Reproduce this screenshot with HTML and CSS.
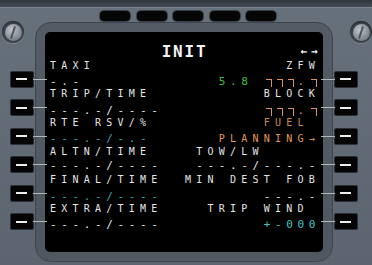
FILE: index.html
```html
<!DOCTYPE html>
<html>
<head>
<meta charset="utf-8">
<link rel="stylesheet" href="styles.css">
</head>
<body>
<div class="device">
  <div class="topbar"></div>
  <div class="annun">
    <span class="lamp"></span><span class="lamp"></span><span class="lamp"></span><span class="lamp"></span><span class="lamp"></span>
  </div>
  <div class="main">
    <div class="side left">
      <div class="socket"><div class="screw"></div></div>
      <div class="lsks">
        <div class="lsk"></div><div class="lsk"></div><div class="lsk"></div>
        <div class="lsk"></div><div class="lsk"></div><div class="lsk"></div>
      </div>
    </div>
    <div class="bezel">
      <div class="screen">
        <div class="title-row"><span></span><span class="title">INIT</span><span class="arrows">←→</span></div>
        <div class="ln sm w">TAXI                 ZFW</div>
        <div class="ln"><span class="lg w">-.-</span><span class="sm">            </span><span class="lg g">5.8</span><span class="sm"> </span><span class="boxes"><i class="box"></i><i class="box"></i><i class="box"></i><span class="lg">.</span><i class="box"></i></span></div>
        <div class="ln sm w">TRIP/TIME          BLOCK</div>
        <div class="ln"><span class="lg w">---.-/----</span><span class="sm">         </span><span class="boxes"><i class="box"></i><i class="box"></i><i class="box"></i><span class="lg">.</span><i class="box"></i></span></div>
        <div class="ln sm"><span class="w">RTE RSV/%          </span><span class="a2">FUEL</span> </div>
        <div class="ln"><span class="lg c">---.-/-.-</span><span class="sm">      </span><span class="sm a">PLANNING→</span></div>
        <div class="ln sm w">ALTN/TIME    TOW/LW     </div>
        <div class="ln lg w">---.-/----   ---.-/---.-</div>
        <div class="ln sm w">FINAL/TIME  MIN DEST FOB</div>
        <div class="ln"><span class="lg c">---.-/----</span><span class="sm">         </span><span class="lg w">---.-</span></div>
        <div class="ln sm w">EXTRA/TIME    TRIP WIND </div>
        <div class="ln"><span class="lg w">---.-/----</span><span class="sm">         </span><span class="lg c2">+-000</span></div>
        <div class="ln sm"> </div>
      </div>
    </div>
    <div class="side right">
      <div class="socket"><div class="screw"></div></div>
      <div class="lsks">
        <div class="lsk"></div><div class="lsk"></div><div class="lsk"></div>
        <div class="lsk"></div><div class="lsk"></div><div class="lsk"></div>
      </div>
    </div>
  </div>
</div>
</body>
</html>
```
FILE: styles.css
```css
html, body {
  margin: 0;
  padding: 0;
  background: #5f6872;
}

.device {
  width: 372px;
  height: 265px;
  display: flex;
  flex-direction: column;
  background: linear-gradient(#67717b, #5c656f);
  overflow: hidden;
}

.topbar {
  height: 7px;
  background: linear-gradient(#30363c, #434a52);
  border-bottom: 1px solid #7a848e;
}

.annun {
  height: 13px;
  box-sizing: border-box;
  padding: 3px 0 0 100px;
  display: flex;
  gap: 6.5px;
}

.lamp {
  width: 30px;
  height: 10px;
  background: #060606;
  border-radius: 4px;
  box-shadow: 0 0 0 1px #3b4148;
}

.main {
  display: flex;
  height: 241px;
}

.side {
  display: flex;
  flex-direction: column;
  box-sizing: border-box;
}

.side.left {
  width: 35px;
  padding-left: 2px;
  align-items: flex-start;
}

.side.right {
  width: 39px;
  align-items: flex-end;
}

.socket {
  width: 22px;
  height: 22px;
  border-radius: 50%;
  background: #3d444b;
  display: flex;
  align-items: center;
  justify-content: center;
  box-shadow: inset 0 1px 2px #23282d, 0 1px 0 #7c858e;
}

.screw {
  width: 17px;
  height: 17px;
  border-radius: 50%;
  background: radial-gradient(circle at 40% 35%, #c2c7cc, #8a9097 55%, #5d636a);
  position: relative;
}

.screw::after {
  content: "";
  position: absolute;
  left: 7.5px;
  top: 2px;
  width: 2px;
  height: 13px;
  background: #50565d;
  transform: rotate(18deg);
}

.lsks {
  display: flex;
  flex-direction: column;
  gap: 13.5px;
  margin-top: 28.5px;
}

.side.left .lsks {
  margin-left: 9px;
}

.side.right .lsks {
  margin-right: 15px;
}

.lsk {
  position: relative;
  width: 22px;
  height: 15px;
  background: #050505;
  border-radius: 1px;
  box-shadow: 0 0 0 1px #2b3036;
}

.lsk::before {
  content: "";
  position: absolute;
  left: 5px;
  top: 6.5px;
  width: 11px;
  height: 2px;
  background: #eeeeee;
}

.lsk::after {
  content: "";
  position: absolute;
  top: 7px;
  width: 14px;
  height: 1px;
  background: #b3b9bf;
}

.side.left .lsk::after {
  left: 22px;
}

.side.right .lsk::after {
  right: 22px;
}

.bezel {
  width: 298px;
  height: 240px;
  margin-top: 1px;
  box-sizing: border-box;
  padding: 9px;
  background: linear-gradient(#535b64, #4f5760);
  border: 1px solid #3e454d;
  border-radius: 16px;
}

.screen {
  height: 220px;
  box-sizing: border-box;
  padding: 12.6px 3px 0 5px;
  background: #000;
  border-radius: 5px;
  font-family: "DejaVu Sans Mono", monospace;
}

.title-row {
  height: 14.3px;
  display: grid;
  grid-template-columns: 1fr auto 1fr;
  align-items: center;
}

.title {
  font-size: 16px;
  font-weight: bold;
  color: #f4f4f4;
  letter-spacing: 1.8px;
  line-height: 14.3px;
  margin-left: -1px;
}

.arrows {
  justify-self: end;
  font-size: 11px;
  font-weight: bold;
  color: #f0f0f0;
  letter-spacing: 4px;
  line-height: 14.3px;
  margin-right: -2px;
}

.ln {
  height: 14.3px;
  line-height: 14.3px;
  white-space: pre;
}

.sm {
  font-size: 10px;
  letter-spacing: 5.2295px;
  line-height: 14.3px;
}

.lg {
  font-size: 11px;
  letter-spacing: 4.6274px;
  line-height: 14.3px;
}

.w { color: #e6e6e6; }
.c { color: #37aab4; }
.c2 { color: #45c6c8; }
.g { color: #3fc040; }
.a { color: #e3995c; }
.a2 { color: #c98b56; }

.boxes {
  color: #d9906a;
}

.box {
  display: inline-block;
  width: 5px;
  height: 7px;
  border-top: 1px solid #d9906a;
  border-right: 1px solid #d9906a;
  margin: 0 3.25px 0 2px;
  vertical-align: -2px;
}
```
